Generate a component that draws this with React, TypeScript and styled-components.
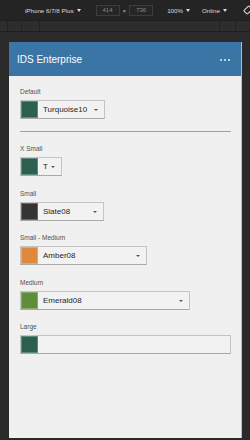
import * as React from 'react'
import styled, { createGlobalStyle } from 'styled-components'

const Global = createGlobalStyle`
  html, body {
    margin: 0;
    padding: 0;
    background: #2a2a2a;
    font-family: "Liberation Sans", Arial, sans-serif;
  }
  #root {
    width: 250px;
    height: 440px;
    overflow: hidden;
  }
`

const Toolbar = styled.div`
  height: 20px;
  background: #242424;
  display: flex;
  align-items: center;
  padding-left: 25px;
  color: #dcdcdc;
  font-size: 6.2px;
  white-space: nowrap;
`

const ToolItem = styled.span<{ $ml?: number }>`
  margin-left: ${(p) => p.$ml ?? 0}px;
  display: inline-flex;
  align-items: center;
  gap: 3px;
  flex: none;
`

const Caret = styled.span`
  display: inline-block;
  width: 0;
  height: 0;
  border-left: 2px solid transparent;
  border-right: 2px solid transparent;
  border-top: 3px solid #dcdcdc;
`

const SizeBox = styled.span<{ $ml?: number }>`
  margin-left: ${(p) => p.$ml ?? 0}px;
  width: 24px;
  height: 11px;
  flex: none;
  box-sizing: border-box;
  border: 1px solid #3d3d3d;
  background: #262626;
  color: #8a8a8a;
  display: inline-flex;
  align-items: center;
  justify-content: center;
  font-size: 6px;
`

const Ruler = styled.div`
  height: 10px;
  background: #2d2d2d;
  border-top: 1px solid #1f1f1f;
  border-bottom: 1px solid #1f1f1f;
  display: flex;
`

const Tick = styled.div<{ $w: number }>`
  width: ${(p) => p.$w}px;
  border-right: 1px solid #232323;
`

const Stage = styled.div`
  padding: 10px 8px 0 9px;
`

const Device = styled.div`
  width: 233px;
  height: 396px;
  background: #f0f0f0;
  border-right: 1px solid #bcbcbc;
  box-sizing: border-box;
  display: flex;
  flex-direction: column;
`

const Header = styled.div`
  height: 34px;
  background: #3b75a5;
  display: flex;
  align-items: center;
  justify-content: space-between;
  padding: 1px 11px 0 8px;
  box-sizing: border-box;
  color: #fff;
`

const Title = styled.div`
  font-size: 10px;
`

const Dots = styled.div`
  display: flex;
  gap: 2px;
  span {
    width: 2px;
    height: 2px;
    background: #e6eef5;
    border-radius: 1px;
  }
`

const Body = styled.div`
  padding: 11px 10px 0 11px;
  display: flex;
  flex-direction: column;
`

const Field = styled.div`
  display: flex;
  flex-direction: column;
  gap: 4px;
  margin-bottom: 12.5px;
`

const Label = styled.div`
  font-size: 6.5px;
  line-height: 9px;
  color: #505050;
`

const Dropdown = styled.div<{ $w: number }>`
  width: ${(p) => p.$w}px;
  height: 19px;
  box-sizing: border-box;
  border: 1px solid #c4c4c4;
  border-bottom-color: #a8a8a8;
  background: #f2f2f2;
  display: flex;
  align-items: center;
  position: relative;
`

const Swatch = styled.div<{ $color: string }>`
  width: 17px;
  height: 17px;
  box-sizing: border-box;
  background: ${(p) => p.$color};
  border: 1px solid rgba(255, 255, 255, 0.25);
  flex: none;
`

const Value = styled.div`
  margin-left: 5px;
  font-size: 8px;
  color: #1e1e1e;
`

const Arrow = styled.span`
  position: absolute;
  right: 6px;
  top: 8px;
  width: 0;
  height: 0;
  border-left: 2.5px solid transparent;
  border-right: 2.5px solid transparent;
  border-top: 2.5px solid #555;
`

const Divider = styled.div`
  height: 1px;
  background: #9f9f9f;
  margin: 12px 0 12px;
`

type Swatchy = { label: string; color: string; value?: string; w: number }

const fields: Swatchy[] = [
  { label: 'X Small', color: '#2b6051', value: 'T', w: 42 },
  { label: 'Small', color: '#343434', value: 'Slate08', w: 84 },
  { label: 'Small - Medium', color: '#e0893b', value: 'Amber08', w: 127 },
  { label: 'Medium', color: '#5f8e3a', value: 'Emerald08', w: 170 },
  { label: 'Large', color: '#2b6051', w: 211 },
]

function ColorPicker({ label, color, value, w }: Swatchy) {
  return (
    <Field>
      <Label>{label}</Label>
      <Dropdown $w={w}>
        <Swatch $color={color} />
        {value && <Value>{value}</Value>}
        {value && <Arrow />}
      </Dropdown>
    </Field>
  )
}

function RotateIcon() {
  return (
    <svg width="10" height="10" viewBox="0 0 10 10" style={{ marginLeft: 16, flex: 'none' }}>
      <rect x="2.5" y="1.5" width="5" height="7" rx="0.8" fill="none" stroke="#dcdcdc" strokeWidth="1" transform="rotate(45 5 5)" />
    </svg>
  )
}

export default function App() {
  return (
    <>
      <Global />
      <Toolbar>
        <ToolItem>
          iPhone 6/7/8 Plus <Caret />
        </ToolItem>
        <SizeBox $ml={15}>414</SizeBox>
        <ToolItem $ml={3} style={{ color: '#bbb' }}>×</ToolItem>
        <SizeBox $ml={3}>736</SizeBox>
        <ToolItem $ml={14}>
          100% <Caret />
        </ToolItem>
        <ToolItem $ml={12}>
          Online <Caret />
        </ToolItem>
        <RotateIcon />
      </Toolbar>
      <Ruler>
        <Tick $w={7} />
        <Tick $w={13} />
        <Tick $w={17} />
        <Tick $w={179} />
        <Tick $w={15} />
      </Ruler>
      <Stage>
        <Device>
          <Header>
            <Title>IDS Enterprise</Title>
            <Dots>
              <span />
              <span />
              <span />
            </Dots>
          </Header>
          <Body>
            <Field style={{ marginBottom: 0 }}>
              <Label>Default</Label>
              <Dropdown $w={85}>
                <Swatch $color="#2b6051" />
                <Value>Turquoise10</Value>
                <Arrow />
              </Dropdown>
            </Field>
            <Divider />
            {fields.map((f) => (
              <ColorPicker key={f.label} {...f} />
            ))}
          </Body>
        </Device>
      </Stage>
    </>
  )
}
